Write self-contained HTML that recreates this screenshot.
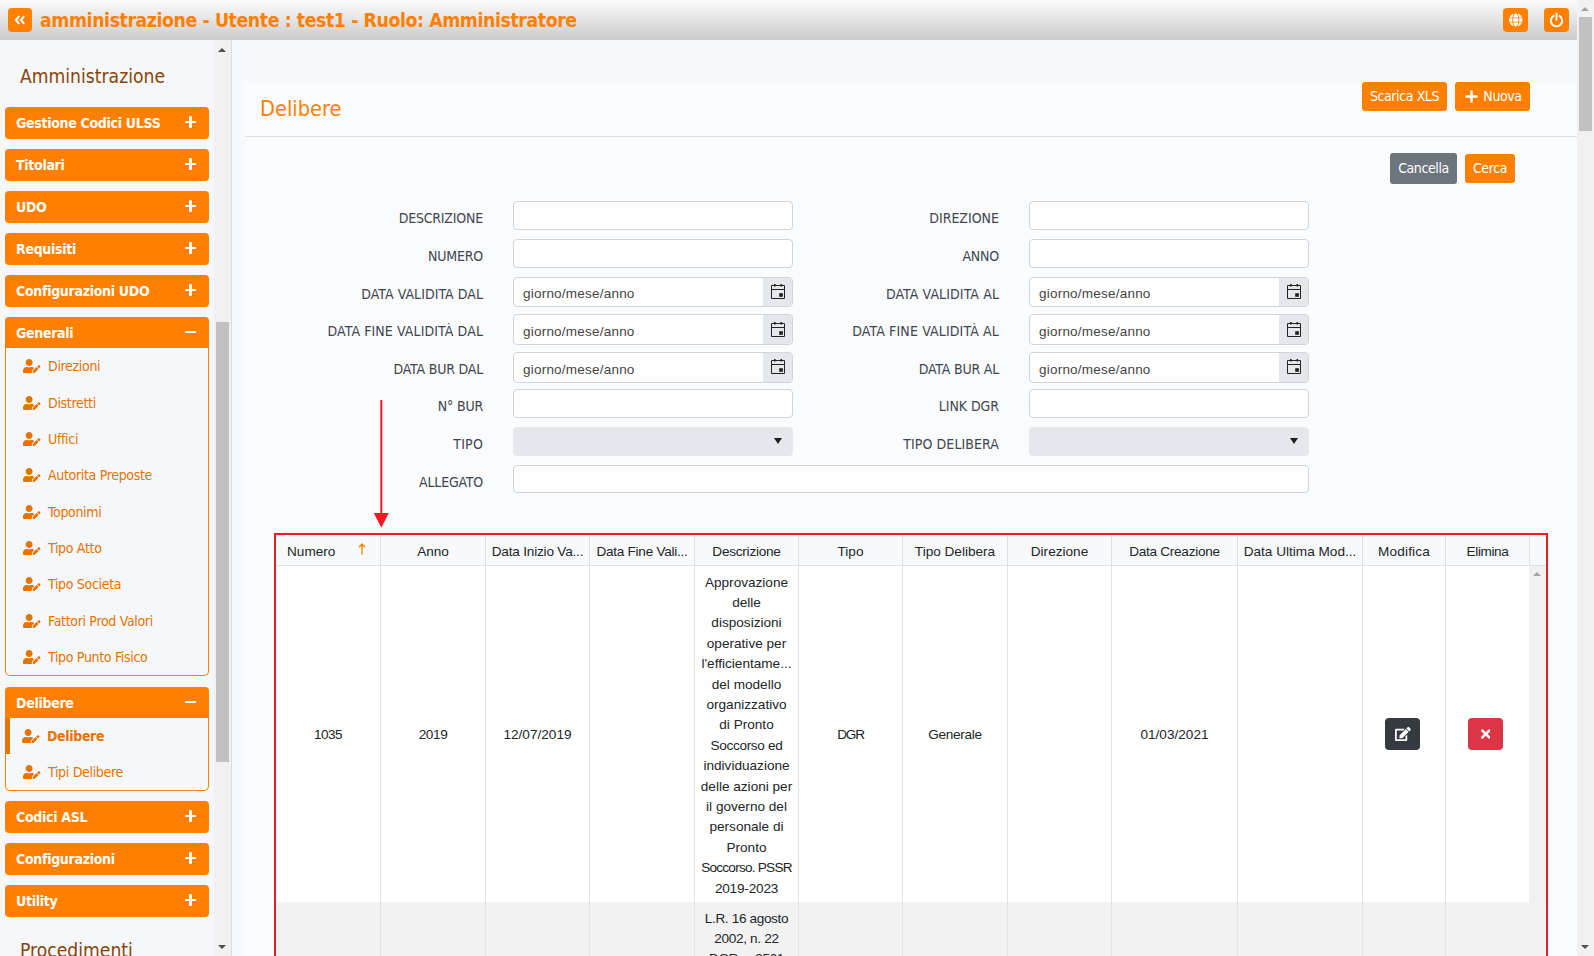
<!DOCTYPE html>
<html lang="it">
<head>
<meta charset="utf-8">
<title>Delibere - amministrazione</title>
<style>
*{box-sizing:border-box;margin:0;padding:0}
html,body{width:1594px;height:956px;overflow:hidden}
body{position:relative;background:#f7f8fb;font-family:"DejaVu Sans Condensed","Liberation Sans",sans-serif;font-size:14px;color:#444}
.abs{position:absolute}
/* ---------- top bar ---------- */
#topbar{position:absolute;left:0;top:0;width:1577px;height:40px;background:linear-gradient(#fafafa 0%,#f0f0f0 25%,#e4e4e4 50%,#d7d7d7 75%,#cbcbcb 100%)}
.tbtn{position:absolute;top:8px;width:25px;height:24px;background:#ff8000;border-radius:4px}
.tbtn svg{position:absolute;left:0;top:0}
#toggle{left:8px;width:24px}
#apptitle{position:absolute;left:40px;top:9px;height:24px;line-height:24px;font-size:19.3px;letter-spacing:-.41px;font-weight:bold;color:#ff8000;white-space:nowrap}
/* ---------- scrollbars ---------- */
.sbar{position:absolute;background:#f1f1f1}
.sbar .thumb{position:absolute;left:2px;width:13px;background:#c1c1c1}
.sbar .arr{position:absolute;left:4px;width:0;height:0;border-left:4.5px solid transparent;border-right:4.5px solid transparent}
.sbar .up{border-bottom:4.5px solid #505050}
.sbar .down{border-top:4.5px solid #505050}
.sbar .up.dis{border-bottom-color:#a3a3a3}
/* ---------- sidebar ---------- */
#sidebar{position:absolute;left:0;top:40px;width:232px;height:916px;background:#f5f7fb;border-right:1px solid #dcdcdc;overflow:hidden}
#sidebar h2{position:absolute;left:20px;font-size:19.15px;font-weight:normal;color:#87450a;white-space:nowrap;line-height:24px}
.mbtn{position:absolute;left:5px;width:204px;height:32px;background:#ff8000;border-radius:4px;color:#fff;font-weight:bold;font-size:14px;line-height:33px;padding-left:11px;white-space:nowrap;letter-spacing:-.3px}
.mbtn.open{border-radius:4px 4px 0 0;height:31px}
.mbtn i{position:absolute;right:13px;top:13.8px;width:11px;height:2.4px;background:#fff;border-radius:1px}
.mbtn i.plus:after{content:"";position:absolute;left:4px;top:-4.8px;width:2.7px;height:12px;background:#fff;border-radius:1px}
.sub{position:absolute;left:5px;width:204px;border:1px solid #ff8000;border-top:0;border-radius:0 0 5px 5px;list-style:none}
.sub li{position:relative;height:36.33px;line-height:37px;padding-left:42px;color:#e67300;font-size:14px;white-space:nowrap;letter-spacing:-.32px}
.sub li svg{position:absolute;left:17px;top:11px}
.sub li.active{font-weight:bold;padding-left:41px;letter-spacing:-.35px}
.sub li.active:before{content:"";position:absolute;left:-1px;top:0;width:5px;height:36px;background:#e67300}
.sub li.active svg{left:16px}
#sub2 li{height:36px;line-height:37px}
/* ---------- content ---------- */
#content{position:absolute;left:232px;top:40px;width:1345px;height:916px;background:#f8f9fa;overflow:hidden}
#card{position:absolute;left:13px;top:42px;width:1332px;height:880px;background:#fafbfc}
#card h1{position:absolute;left:15px;top:13px;font-size:21.6px;line-height:28px;font-weight:normal;color:#ff8000}
#card .rule{position:absolute;left:0;top:54px;width:1332px;height:1px;background:#d9e0e6}
.btn{position:absolute;border-radius:3px;color:#fff;font-size:14px;text-align:center;white-space:nowrap;letter-spacing:-.4px}
.btn.or{background:#ff8000}
.btn.gr{background:#6c757d}
/* form */
.lbl{position:absolute;height:20px;line-height:20px;text-align:right;font-size:14px;color:#40454f;white-space:nowrap;letter-spacing:-.2px}
.inp{position:absolute;height:29px;background:#fff;border:1px solid #ced4da;border-radius:4px;font-family:"Liberation Sans",sans-serif;font-size:13.5px;letter-spacing:.22px;color:#444;line-height:27px;padding-left:9px;overflow:hidden}
.inp.date{height:30px;line-height:32px}
.inp.date b{position:absolute;right:0;top:0;width:29px;height:28px;background:#e4e7eb;display:block}
.inp.date b svg{position:absolute;left:7px;top:6px}
.inp.date.t{height:31px;line-height:34px}
.inp.date.t b{height:29px}
.inp.date.t b svg{top:7px}
.inp.date.t.u b svg{top:6px}
.inp.sel{background:#e4e7eb;border-color:#e4e7eb}
.inp.sel:after{content:"";position:absolute;right:10px;top:10px;border-left:4px solid transparent;border-right:4px solid transparent;border-top:6px solid #222}
/* grid */
#grid{position:absolute;left:29px;top:451px;width:1274px;height:440px;border:2px solid #ed1c24;border-bottom:0;background:#fff;overflow:hidden;font-family:"Liberation Sans",sans-serif;font-size:13.6px;color:#212529}
#grid .hd{position:absolute;left:0;top:0;width:1270px;height:31px;background:#f8f9fa;border-bottom:1px solid #dee2e6}
#grid .c{position:absolute;top:0;height:100%;border-right:1px solid #dee2e6;text-align:center;white-space:nowrap;overflow:hidden}
#grid .hd .c{line-height:33px}
#grid .row{position:absolute;left:0;width:1270px}
#grid .row .c{border-right-color:#e2e2e2}
#grid .row .c12{border-right-color:transparent}
#grid .row .c span{position:absolute;left:0;right:0;top:50%;margin-top:-9px;line-height:20px}
#grid i{font-style:normal}
#grid .row .c p{line-height:20.4px;padding-top:6.5px}
.c1{left:0px;width:105px}.c2{left:105px;width:105px}.c3{left:210px;width:104px}.c4{left:314px;width:105px}
.c5{left:419px;width:104px}.c6{left:523px;width:104px}.c7{left:627px;width:105px}.c8{left:732px;width:104px}
.c9{left:836px;width:126px}.c10{left:962px;width:125px}.c11{left:1087px;width:83px}.c12{left:1170px;width:84px}
.ibtn{position:absolute;top:152px;width:35px;height:32px;border-radius:4px}
</style>
</head>
<body>

<!-- TOP BAR -->
<div id="topbar">
  <div class="tbtn" id="toggle"><svg width="24" height="24" viewBox="0 0 24 24"><path d="M11.2 8.2 7.8 12l3.4 3.8M16.2 8.2 12.8 12l3.4 3.8" fill="none" stroke="#fff" stroke-width="2"/></svg></div>
  <div id="apptitle">amministrazione - Utente : test1 - Ruolo: Amministratore</div>
  <div class="tbtn" style="left:1503px"><svg style="left:6px;top:5px" width="13.5" height="14" viewBox="0 0 496 512"><path fill="#fff" d="M336.500 160C322 70.700 287.800 8 248 8s-74 62.700-88.500 152h177zM152 256c0 22.200 1.200 43.500 3.300 64h185.300c2.100-20.500 3.300-41.800 3.300-64s-1.200-43.500-3.300-64H155.300c-2.100 20.500-3.300 41.800-3.300 64zm324.700-96c-28.600-67.900-86.500-120.400-158-141.600 24.400 33.800 41.200 84.700 50 141.600h108zM177.200 18.400C105.800 39.600 47.800 92.100 19.300 160h108c8.700-56.900 25.500-107.800 49.900-141.600zM487.400 192H372.700c2.100 21 3.300 42.500 3.300 64s-1.200 43-3.300 64h114.600c5.500-20.500 8.600-41.800 8.600-64s-3.100-43.500-8.500-64zM120 256c0-21.500 1.200-43 3.300-64H8.600C3.200 212.500 0 233.800 0 256s3.200 43.500 8.600 64h114.600c-2-21-3.200-42.500-3.200-64zm39.500 96c14.500 89.300 48.700 152 88.500 152s74-62.700 88.500-152h-177zm159.300 141.600c71.400-21.200 129.400-73.700 158-141.600h-108c-8.800 56.900-25.600 107.800-50 141.600zM19.300 352c28.600 67.900 86.500 120.400 158 141.600-24.400-33.800-41.200-84.700-50-141.600h-108z"/></svg></div>
  <div class="tbtn" style="left:1544px"><svg style="left:5px;top:4px" width="15" height="16" viewBox="0 0 15 16"><path d="M4.600 3.900A5.600 5.600 0 1 0 10.400 3.900" fill="none" stroke="#fff" stroke-width="2" stroke-linecap="round"/><path d="M7.500 1.300v6.500" stroke="#fff" stroke-width="1.700" stroke-linecap="round"/></svg></div>
</div>

<!-- SIDEBAR -->
<div id="sidebar">
  <h2 style="top:25px">Amministrazione</h2>
  <div class="mbtn" style="top:67px">Gestione Codici ULSS<i class="plus"></i></div>
  <div class="mbtn" style="top:109px">Titolari<i class="plus"></i></div>
  <div class="mbtn" style="top:151px">UDO<i class="plus"></i></div>
  <div class="mbtn" style="top:193px">Requisiti<i class="plus"></i></div>
  <div class="mbtn" style="top:235px">Configurazioni UDO<i class="plus"></i></div>
  <div class="mbtn open" style="top:277px">Generali<i></i></div>
  <ul class="sub" style="top:308.25px" id="sub1">
    <li><svg width="17.5" height="14" viewBox="0 0 640 512"><path fill="#e67300" d="M224 256c70.700 0 128-57.300 128-128S294.700 0 224 0 96 57.300 96 128s57.300 128 128 128zm89.600 32h-16.700c-22.200 10.200-46.900 16-72.900 16s-50.600-5.800-72.900-16h-16.700C60.200 288 0 348.200 0 422.400V464c0 26.500 21.500 48 48 48h274.900c-2.400-6.800-3.400-14-2.600-21.300l6.800-60.900 1.200-11.100 7.900-7.900 77.300-77.300c-24.500-27.700-60-45.500-99.900-45.500zm45.300 145.300l-6.800 61c-1.100 10.200 7.500 18.800 17.600 17.600l60.900-6.800 137.900-137.900-71.700-71.700-137.900 137.800zM633 268.900L595.100 231c-9.300-9.300-24.500-9.300-33.800 0l-37.800 37.800-4.100 4.100 71.800 71.700 41.800-41.800c9.300-9.400 9.300-24.500 0-33.900z"/></svg>Direzioni</li><li><svg width="17.5" height="14" viewBox="0 0 640 512"><path fill="#e67300" d="M224 256c70.700 0 128-57.300 128-128S294.700 0 224 0 96 57.300 96 128s57.300 128 128 128zm89.600 32h-16.700c-22.200 10.200-46.900 16-72.900 16s-50.600-5.800-72.900-16h-16.700C60.200 288 0 348.200 0 422.400V464c0 26.500 21.500 48 48 48h274.900c-2.400-6.800-3.400-14-2.600-21.300l6.800-60.900 1.200-11.100 7.900-7.900 77.300-77.300c-24.500-27.700-60-45.500-99.900-45.500zm45.300 145.300l-6.800 61c-1.100 10.200 7.500 18.800 17.600 17.600l60.900-6.800 137.900-137.900-71.700-71.700-137.900 137.800zM633 268.900L595.100 231c-9.300-9.300-24.500-9.300-33.800 0l-37.800 37.800-4.100 4.100 71.800 71.700 41.800-41.800c9.300-9.400 9.300-24.500 0-33.900z"/></svg>Distretti</li><li><svg width="17.5" height="14" viewBox="0 0 640 512"><path fill="#e67300" d="M224 256c70.700 0 128-57.300 128-128S294.700 0 224 0 96 57.300 96 128s57.300 128 128 128zm89.600 32h-16.700c-22.200 10.200-46.900 16-72.900 16s-50.600-5.800-72.900-16h-16.700C60.200 288 0 348.200 0 422.400V464c0 26.500 21.500 48 48 48h274.900c-2.400-6.800-3.400-14-2.600-21.300l6.800-60.900 1.200-11.100 7.900-7.900 77.300-77.300c-24.500-27.700-60-45.500-99.900-45.500zm45.300 145.300l-6.800 61c-1.100 10.200 7.500 18.800 17.600 17.600l60.900-6.800 137.900-137.900-71.700-71.700-137.900 137.800zM633 268.900L595.100 231c-9.300-9.300-24.500-9.300-33.800 0l-37.800 37.800-4.100 4.100 71.800 71.700 41.800-41.800c9.300-9.400 9.300-24.500 0-33.900z"/></svg>Uffici</li><li><svg width="17.5" height="14" viewBox="0 0 640 512"><path fill="#e67300" d="M224 256c70.700 0 128-57.300 128-128S294.700 0 224 0 96 57.300 96 128s57.300 128 128 128zm89.600 32h-16.700c-22.200 10.200-46.900 16-72.900 16s-50.600-5.800-72.900-16h-16.700C60.200 288 0 348.200 0 422.400V464c0 26.500 21.500 48 48 48h274.900c-2.400-6.800-3.400-14-2.600-21.300l6.800-60.900 1.200-11.100 7.900-7.900 77.300-77.300c-24.500-27.700-60-45.500-99.900-45.500zm45.300 145.300l-6.800 61c-1.100 10.200 7.500 18.800 17.600 17.600l60.900-6.800 137.900-137.900-71.700-71.700-137.900 137.800zM633 268.900L595.100 231c-9.300-9.300-24.500-9.300-33.800 0l-37.800 37.800-4.100 4.100 71.800 71.700 41.800-41.800c9.300-9.400 9.300-24.500 0-33.900z"/></svg>Autorita Preposte</li><li><svg width="17.5" height="14" viewBox="0 0 640 512"><path fill="#e67300" d="M224 256c70.700 0 128-57.300 128-128S294.700 0 224 0 96 57.300 96 128s57.300 128 128 128zm89.600 32h-16.700c-22.200 10.200-46.900 16-72.900 16s-50.600-5.800-72.900-16h-16.700C60.200 288 0 348.200 0 422.400V464c0 26.500 21.500 48 48 48h274.900c-2.400-6.800-3.400-14-2.600-21.300l6.800-60.900 1.200-11.100 7.900-7.900 77.300-77.300c-24.500-27.700-60-45.500-99.900-45.500zm45.300 145.300l-6.800 61c-1.100 10.200 7.500 18.800 17.600 17.600l60.900-6.800 137.900-137.900-71.700-71.700-137.900 137.800zM633 268.900L595.100 231c-9.300-9.300-24.500-9.300-33.800 0l-37.800 37.800-4.100 4.100 71.800 71.700 41.800-41.800c9.300-9.400 9.300-24.500 0-33.900z"/></svg>Toponimi</li><li><svg width="17.5" height="14" viewBox="0 0 640 512"><path fill="#e67300" d="M224 256c70.700 0 128-57.300 128-128S294.700 0 224 0 96 57.300 96 128s57.300 128 128 128zm89.600 32h-16.700c-22.200 10.200-46.900 16-72.900 16s-50.600-5.800-72.900-16h-16.700C60.200 288 0 348.200 0 422.400V464c0 26.500 21.500 48 48 48h274.900c-2.400-6.800-3.400-14-2.600-21.300l6.800-60.900 1.200-11.100 7.900-7.900 77.300-77.300c-24.500-27.700-60-45.500-99.900-45.500zm45.300 145.300l-6.800 61c-1.100 10.200 7.500 18.800 17.600 17.600l60.900-6.800 137.900-137.900-71.700-71.700-137.900 137.800zM633 268.900L595.100 231c-9.300-9.300-24.500-9.300-33.800 0l-37.800 37.800-4.100 4.100 71.800 71.700 41.800-41.800c9.300-9.400 9.300-24.500 0-33.900z"/></svg>Tipo Atto</li><li><svg width="17.5" height="14" viewBox="0 0 640 512"><path fill="#e67300" d="M224 256c70.700 0 128-57.300 128-128S294.700 0 224 0 96 57.300 96 128s57.300 128 128 128zm89.600 32h-16.700c-22.200 10.200-46.900 16-72.900 16s-50.600-5.800-72.900-16h-16.700C60.200 288 0 348.200 0 422.400V464c0 26.500 21.500 48 48 48h274.900c-2.400-6.800-3.400-14-2.600-21.300l6.800-60.900 1.200-11.100 7.900-7.900 77.300-77.300c-24.500-27.700-60-45.500-99.900-45.500zm45.300 145.300l-6.800 61c-1.100 10.200 7.500 18.800 17.600 17.600l60.900-6.800 137.900-137.900-71.700-71.700-137.900 137.800zM633 268.900L595.100 231c-9.300-9.300-24.500-9.300-33.800 0l-37.800 37.800-4.100 4.100 71.800 71.700 41.800-41.800c9.300-9.400 9.300-24.500 0-33.900z"/></svg>Tipo Societa</li><li><svg width="17.5" height="14" viewBox="0 0 640 512"><path fill="#e67300" d="M224 256c70.700 0 128-57.300 128-128S294.700 0 224 0 96 57.300 96 128s57.300 128 128 128zm89.600 32h-16.700c-22.200 10.200-46.900 16-72.900 16s-50.600-5.800-72.900-16h-16.700C60.200 288 0 348.200 0 422.400V464c0 26.500 21.500 48 48 48h274.900c-2.400-6.800-3.400-14-2.600-21.300l6.800-60.900 1.200-11.100 7.900-7.900 77.300-77.300c-24.500-27.700-60-45.500-99.900-45.500zm45.300 145.300l-6.800 61c-1.100 10.200 7.500 18.800 17.600 17.600l60.900-6.800 137.900-137.900-71.700-71.700-137.900 137.800zM633 268.900L595.100 231c-9.300-9.300-24.500-9.300-33.800 0l-37.800 37.800-4.100 4.100 71.800 71.700 41.800-41.800c9.300-9.400 9.300-24.500 0-33.900z"/></svg>Fattori Prod Valori</li><li><svg width="17.5" height="14" viewBox="0 0 640 512"><path fill="#e67300" d="M224 256c70.700 0 128-57.300 128-128S294.700 0 224 0 96 57.300 96 128s57.300 128 128 128zm89.600 32h-16.700c-22.200 10.200-46.900 16-72.900 16s-50.600-5.800-72.900-16h-16.700C60.200 288 0 348.200 0 422.400V464c0 26.500 21.500 48 48 48h274.900c-2.400-6.800-3.400-14-2.600-21.300l6.800-60.900 1.200-11.100 7.900-7.900 77.300-77.300c-24.500-27.700-60-45.500-99.900-45.500zm45.300 145.300l-6.800 61c-1.100 10.200 7.500 18.800 17.600 17.600l60.900-6.800 137.900-137.900-71.700-71.700-137.900 137.800zM633 268.900L595.100 231c-9.300-9.300-24.500-9.300-33.800 0l-37.800 37.800-4.100 4.100 71.800 71.700 41.800-41.800c9.300-9.400 9.300-24.500 0-33.900z"/></svg>Tipo Punto Fisico</li>
  </ul>
  <div class="mbtn open" style="top:647px">Delibere<i></i></div>
  <ul class="sub" style="top:678px" id="sub2">
    <li class="active"><svg width="17.5" height="14" viewBox="0 0 640 512"><path fill="#e67300" d="M224 256c70.700 0 128-57.300 128-128S294.700 0 224 0 96 57.300 96 128s57.300 128 128 128zm89.600 32h-16.700c-22.200 10.200-46.900 16-72.900 16s-50.600-5.800-72.900-16h-16.700C60.200 288 0 348.200 0 422.400V464c0 26.500 21.500 48 48 48h274.900c-2.400-6.800-3.400-14-2.600-21.300l6.800-60.900 1.200-11.100 7.900-7.900 77.300-77.300c-24.500-27.700-60-45.500-99.900-45.500zm45.300 145.300l-6.800 61c-1.100 10.200 7.500 18.800 17.600 17.600l60.900-6.800 137.900-137.900-71.700-71.700-137.900 137.800zM633 268.900L595.100 231c-9.300-9.300-24.500-9.300-33.800 0l-37.800 37.800-4.100 4.100 71.800 71.700 41.800-41.800c9.300-9.400 9.300-24.500 0-33.900z"/></svg>Delibere</li><li><svg width="17.5" height="14" viewBox="0 0 640 512"><path fill="#e67300" d="M224 256c70.700 0 128-57.300 128-128S294.700 0 224 0 96 57.300 96 128s57.300 128 128 128zm89.600 32h-16.700c-22.200 10.200-46.900 16-72.900 16s-50.600-5.800-72.900-16h-16.700C60.200 288 0 348.200 0 422.400V464c0 26.500 21.500 48 48 48h274.900c-2.400-6.800-3.400-14-2.600-21.300l6.800-60.900 1.200-11.100 7.900-7.900 77.300-77.300c-24.500-27.700-60-45.500-99.900-45.500zm45.300 145.300l-6.800 61c-1.100 10.200 7.500 18.800 17.600 17.600l60.900-6.800 137.900-137.900-71.700-71.700-137.900 137.800zM633 268.900L595.100 231c-9.300-9.300-24.500-9.300-33.800 0l-37.800 37.800-4.100 4.100 71.800 71.700 41.800-41.800c9.300-9.400 9.300-24.500 0-33.900z"/></svg>Tipi Delibere</li>
  </ul>
  <div class="mbtn" style="top:761px">Codici ASL<i class="plus"></i></div>
  <div class="mbtn" style="top:803px">Configurazioni<i class="plus"></i></div>
  <div class="mbtn" style="top:845px">Utility<i class="plus"></i></div>
  <h2 style="top:899px">Procedimenti</h2>
  <div class="sbar" style="left:214px;top:0;width:17px;height:916px">
    <span class="arr up" style="top:8px"></span>
    <span class="thumb" style="top:282px;height:440px"></span>
    <span class="arr down" style="top:905px"></span>
  </div>
</div>

<!-- CONTENT -->
<div id="content">
  <div id="card">
    <h1>Delibere</h1>
    <div class="btn or" style="left:1117px;top:0;width:85px;height:29px;line-height:28px">Scarica XLS</div>
    <div class="btn or" style="left:1210px;top:0;width:75px;height:29px;line-height:28px;padding-left:20px">Nuova<svg class="abs" style="left:10px;top:8px" width="13" height="13" viewBox="0 0 13 13"><path d="M6.500 1.500v10M1.500 6.500h10" stroke="#fff" stroke-width="2.500" stroke-linecap="round" fill="none"/></svg></div>
    <div class="rule"></div>
    <div class="btn gr" style="left:1145px;top:71px;width:67px;height:31px;line-height:30px">Cancella</div>
    <div class="btn or" style="left:1220px;top:72px;width:50px;height:29px;line-height:28px">Cerca</div>

    <!-- FORM -->
    <div id="form">
      <div class="lbl" style="left:38px;top:126px;width:200px">DESCRIZIONE</div><div class="inp" style="left:268px;top:119px;width:280px"></div>
      <div class="lbl" style="left:554px;top:126px;width:200px;letter-spacing:0px">DIREZIONE</div><div class="inp" style="left:784px;top:119px;width:280px"></div>

      <div class="lbl" style="left:38px;top:164px;width:200px">NUMERO</div><div class="inp" style="left:268px;top:157px;width:280px"></div>
      <div class="lbl" style="left:554px;top:164px;width:200px">ANNO</div><div class="inp" style="left:784px;top:157px;width:280px"></div>

      <div class="lbl" style="left:38px;top:202px;width:200px;letter-spacing:0.05px">DATA VALIDITA DAL</div><div class="inp date" style="left:268px;top:195px;width:280px">giorno/mese/anno<b><svg width="16" height="16" viewBox="0 0 16 16"><path d="M1.500 1.500h13v13h-13z" fill="none" stroke="#222" stroke-width="1"/><path d="M1.500 5.500h13" stroke="#222" stroke-width="1"/><path d="M4.800 0v2.400M11.300 0v2.400" stroke="#222" stroke-width="1.600"/><rect x="9.200" y="9.200" width="3.700" height="3.600" fill="#222"/></svg></b></div>
      <div class="lbl" style="left:554px;top:202px;width:200px;letter-spacing:0.1px">DATA VALIDITA AL</div><div class="inp date" style="left:784px;top:195px;width:280px">giorno/mese/anno<b><svg width="16" height="16" viewBox="0 0 16 16"><path d="M1.500 1.500h13v13h-13z" fill="none" stroke="#222" stroke-width="1"/><path d="M1.500 5.500h13" stroke="#222" stroke-width="1"/><path d="M4.800 0v2.400M11.300 0v2.400" stroke="#222" stroke-width="1.600"/><rect x="9.200" y="9.200" width="3.700" height="3.600" fill="#222"/></svg></b></div>

      <div class="lbl" style="left:38px;top:239px;width:200px;letter-spacing:0.1px">DATA FINE VALIDITÀ DAL</div><div class="inp date t" style="left:268px;top:232px;width:280px">giorno/mese/anno<b><svg width="16" height="16" viewBox="0 0 16 16"><path d="M1.500 1.500h13v13h-13z" fill="none" stroke="#222" stroke-width="1"/><path d="M1.500 5.500h13" stroke="#222" stroke-width="1"/><path d="M4.800 0v2.400M11.300 0v2.400" stroke="#222" stroke-width="1.600"/><rect x="9.200" y="9.200" width="3.700" height="3.600" fill="#222"/></svg></b></div>
      <div class="lbl" style="left:554px;top:239px;width:200px;letter-spacing:0.14px">DATA FINE VALIDITÀ AL</div><div class="inp date t" style="left:784px;top:232px;width:280px">giorno/mese/anno<b><svg width="16" height="16" viewBox="0 0 16 16"><path d="M1.500 1.500h13v13h-13z" fill="none" stroke="#222" stroke-width="1"/><path d="M1.500 5.500h13" stroke="#222" stroke-width="1"/><path d="M4.800 0v2.400M11.300 0v2.400" stroke="#222" stroke-width="1.600"/><rect x="9.200" y="9.200" width="3.700" height="3.600" fill="#222"/></svg></b></div>

      <div class="lbl" style="left:38px;top:277px;width:200px">DATA BUR DAL</div><div class="inp date t u" style="left:268px;top:270px;width:280px">giorno/mese/anno<b><svg width="16" height="16" viewBox="0 0 16 16"><path d="M1.500 1.500h13v13h-13z" fill="none" stroke="#222" stroke-width="1"/><path d="M1.500 5.500h13" stroke="#222" stroke-width="1"/><path d="M4.800 0v2.400M11.300 0v2.400" stroke="#222" stroke-width="1.600"/><rect x="9.200" y="9.200" width="3.700" height="3.600" fill="#222"/></svg></b></div>
      <div class="lbl" style="left:554px;top:277px;width:200px">DATA BUR AL</div><div class="inp date t u" style="left:784px;top:270px;width:280px">giorno/mese/anno<b><svg width="16" height="16" viewBox="0 0 16 16"><path d="M1.500 1.500h13v13h-13z" fill="none" stroke="#222" stroke-width="1"/><path d="M1.500 5.500h13" stroke="#222" stroke-width="1"/><path d="M4.800 0v2.400M11.300 0v2.400" stroke="#222" stroke-width="1.600"/><rect x="9.200" y="9.200" width="3.700" height="3.600" fill="#222"/></svg></b></div>

      <div class="lbl" style="left:38px;top:314px;width:200px">N° BUR</div><div class="inp" style="left:268px;top:307px;width:280px"></div>
      <div class="lbl" style="left:554px;top:314px;width:200px;letter-spacing:-0.05px">LINK DGR</div><div class="inp" style="left:784px;top:307px;width:280px"></div>

      <div class="lbl" style="left:38px;top:352px;width:200px;letter-spacing:0.2px">TIPO</div><div class="inp sel" style="left:268px;top:345px;width:280px"></div>
      <div class="lbl" style="left:554px;top:352px;width:200px;letter-spacing:0.08px">TIPO DELIBERA</div><div class="inp sel" style="left:784px;top:345px;width:280px"></div>

      <div class="lbl" style="left:38px;top:390px;width:200px">ALLEGATO</div><div class="inp" style="left:268px;top:383px;width:796px;height:28px"></div>
    </div>

    <!-- red annotation arrow -->
    <svg class="abs" style="left:125px;top:316px" width="20" height="132" viewBox="0 0 20 132"><path d="M11.300 2v114" stroke="#ed1c24" stroke-width="2"/><path d="M3.800 115h15l-7.500 14.800z" fill="#ed1c24"/></svg>

    <!-- GRID -->
    <div id="grid">
      <div class="hd">
        <div class="c c1" style="text-align:left;padding-left:11px">Numero<svg class="abs" style="left:82px;top:8px" width="8" height="12" viewBox="0 0 8 12"><path d="M4 11.5V2M1 4.2 4 1l3 3.2" fill="none" stroke="#ff8000" stroke-width="1.3"/></svg></div>
        <div class="c c2">Anno</div>
        <div class="c c3" style="letter-spacing:-.2px">Data Inizio Va...</div>
        <div class="c c4" style="letter-spacing:-.27px">Data Fine Vali...</div>
        <div class="c c5" style="letter-spacing:-.25px">Descrizione</div>
        <div class="c c6">Tipo</div>
        <div class="c c7">Tipo Delibera</div>
        <div class="c c8">Direzione</div>
        <div class="c c9" style="letter-spacing:-.28px">Data Creazione</div>
        <div class="c c10">Data Ultima Mod...</div>
        <div class="c c11" style="letter-spacing:.15px">Modifica</div>
        <div class="c c12" style="letter-spacing:-.4px">Elimina</div>
      </div>
      <div class="row" style="top:31px;height:336px;background:#fff">
        <div class="c c1"><span style="letter-spacing:-.5px">1035</span></div>
        <div class="c c2"><span style="letter-spacing:-.4px">2019</span></div>
        <div class="c c3"><span>12/07/2019</span></div>
        <div class="c c4"></div>
        <div class="c c5"><p>Approvazione<br>delle<br>disposizioni<br>operative per<br>l'efficientame...<br>del modello<br>organizzativo<br>di Pronto<br><i style="letter-spacing:-.33px">Soccorso ed</i><br>individuazione<br>delle azioni per<br>il governo del<br>personale di<br>Pronto<br><i style="letter-spacing:-.76px">Soccorso. PSSR</i><br><i style="letter-spacing:-.2px">2019-2023</i></p></div>
        <div class="c c6"><span style="letter-spacing:-1.2px">DGR</span></div>
        <div class="c c7"><span style="letter-spacing:-.3px">Generale</span></div>
        <div class="c c8"></div>
        <div class="c c9"><span>01/03/2021</span></div>
        <div class="c c10"></div>
        <div class="c c11"><div class="ibtn" style="left:22px;background:#343a40"><svg class="abs" style="left:10px;top:9px" width="15.750" height="14" viewBox="0 0 576 512"><path fill="#fff" d="M402.600 83.200l90.200 90.200c3.800 3.800 3.800 10 0 13.800L274.400 405.600l-92.800 10.300c-12.400 1.400-22.900-9.100-21.500-21.500l10.300-92.800L388.800 83.200c3.800-3.800 10-3.800 13.800 0zm162-22.900l-48.800-48.800c-15.200-15.200-39.900-15.200-55.200 0l-35.400 35.400c-3.800 3.800-3.800 10 0 13.800l90.200 90.200c3.800 3.800 10 3.800 13.800 0l35.400-35.400c15.200-15.300 15.200-40 0-55.200zM384 346.200V448H64V128h229.800c3.200 0 6.200-1.300 8.500-3.500l40-40c7.600-7.600 2.200-20.500-8.500-20.500H48C21.500 64 0 85.500 0 112v352c0 26.500 21.500 48 48 48h352c26.500 0 48-21.500 48-48V306.200c0-10.700-12.900-16-20.500-8.500l-40 40c-2.200 2.300-3.500 5.300-3.500 8.500z"/></svg></div></div>
        <div class="c c12"><div class="ibtn" style="left:22px;background:#dc3545"><svg class="abs" style="left:12.500px;top:9px" width="9.625" height="14" viewBox="0 0 352 512"><path fill="#fff" d="M242.720 256l100.070-100.070c12.280-12.280 12.280-32.190 0-44.480l-22.240-22.240c-12.280-12.280-32.190-12.280-44.480 0L176 189.280 75.930 89.210c-12.280-12.280-32.190-12.280-44.480 0L9.210 111.450c-12.280 12.280-12.280 32.190 0 44.480L109.280 256 9.210 356.070c-12.280 12.280-12.280 32.190 0 44.480l22.240 22.240c12.280 12.280 32.200 12.280 44.480 0L176 322.720l100.070 100.070c12.280 12.280 32.200 12.280 44.480 0l22.240-22.240c12.280-12.280 12.280-32.190 0-44.480L242.720 256z"/></svg></div></div>
      </div>
      <div class="row" style="top:367px;height:336px;background:#f2f2f2;width:1270px">
        <div class="c c1"></div><div class="c c2"></div><div class="c c3"></div><div class="c c4"></div>
        <div class="c c5"><p><i style="letter-spacing:-.36px">L.R. 16 agosto</i><br><i style="letter-spacing:-.32px">2002, n. 22</i><br><i style="letter-spacing:-.4px">DGR n. 2501</i><br>del 2004</p></div>
        <div class="c c6"></div><div class="c c7"></div><div class="c c8"></div><div class="c c9"></div><div class="c c10"></div><div class="c c11"></div><div class="c c12"></div>
      </div>
      <div class="sbar" style="left:1253px;top:31px;width:17px;height:336px">
        <span class="arr up dis" style="top:6px"></span>
      </div>
    </div>
  </div>
</div>

<!-- page scrollbar -->
<div class="sbar" style="left:1577px;top:0;width:17px;height:956px">
  <span class="arr up dis" style="top:7px"></span>
  <span class="thumb" style="top:17px;height:114px"></span>
  <span class="arr down" style="top:945px"></span>
</div>

</body>
</html>
